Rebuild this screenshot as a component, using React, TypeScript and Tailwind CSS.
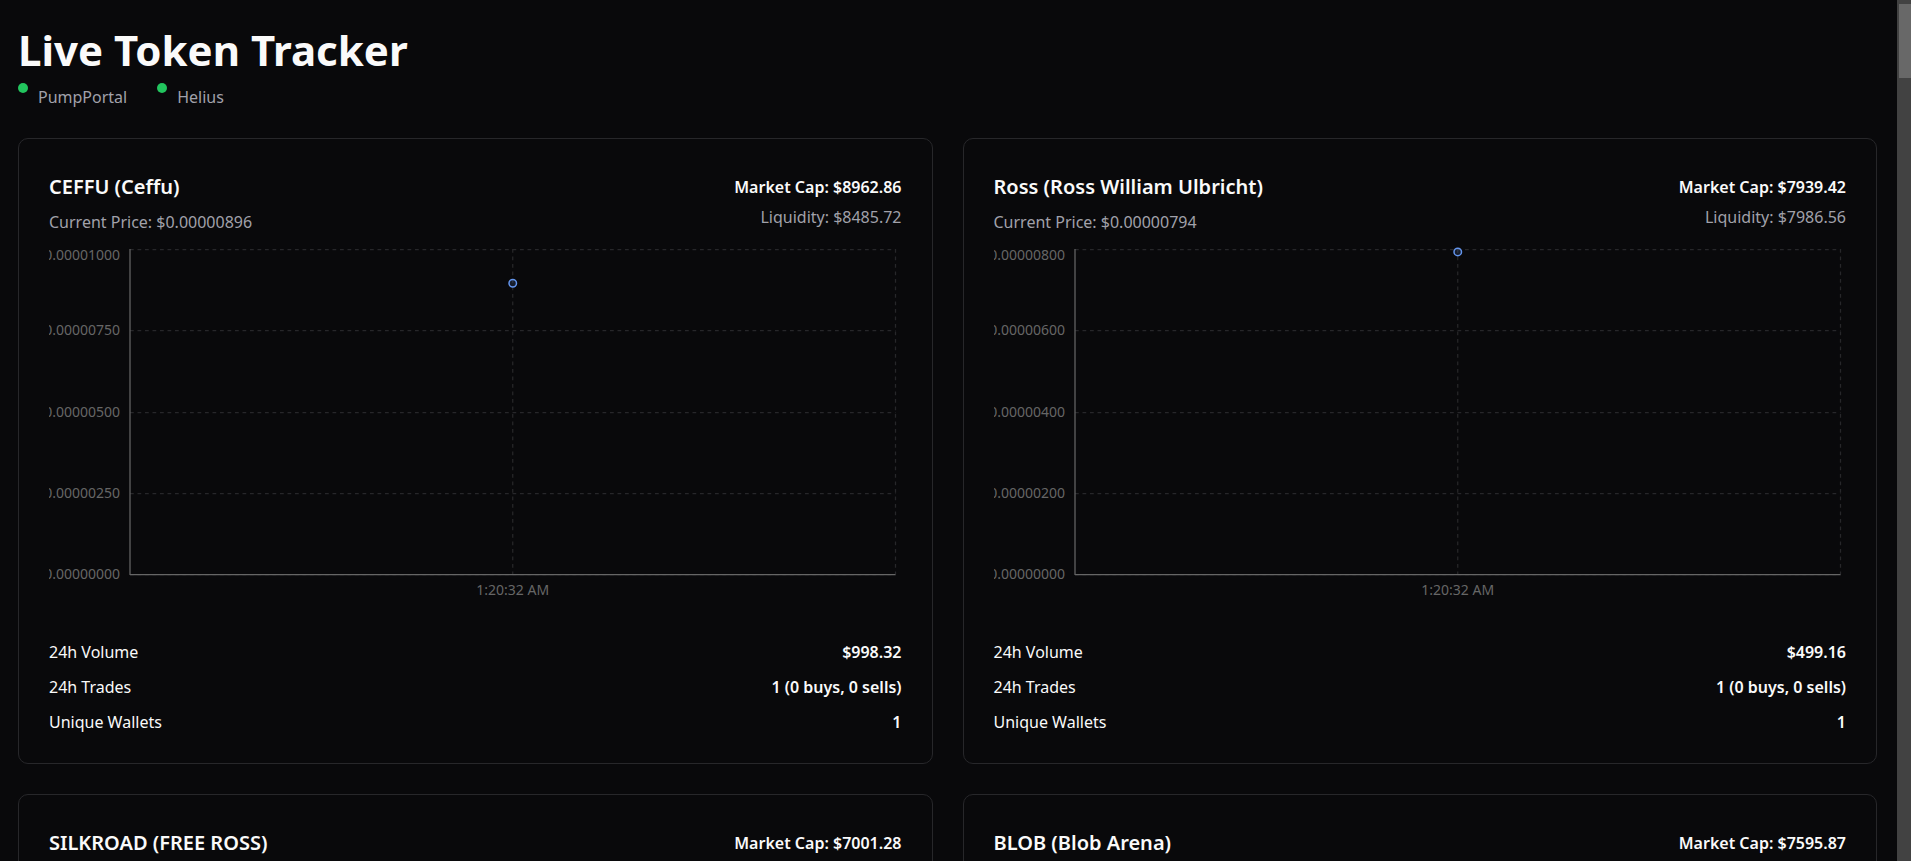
type Token = {
  name: string;
  price: string;
  marketCap: string;
  liquidity: string;
  volume: string;
  ticks: string[];
  /** Share of the y axis reached by the latest price, 0 to 1. */
  level: number;
};

const PLOT_HEIGHT = 325;
const TIME = "1:20:32 AM";

const tokens: Token[] = [
  {
    name: "CEFFU (Ceffu)",
    price: "0.00000896",
    marketCap: "8962.86",
    liquidity: "8485.72",
    volume: "998.32",
    ticks: ["0.00001000", "0.00000750", "0.00000500", "0.00000250", "0.00000000"],
    level: 0.896,
  },
  {
    name: "Ross (Ross William Ulbricht)",
    price: "0.00000794",
    marketCap: "7939.42",
    liquidity: "7986.56",
    volume: "499.16",
    ticks: ["0.00000800", "0.00000600", "0.00000400", "0.00000200", "0.00000000"],
    level: 0.9925,
  },
  {
    name: "SILKROAD (FREE ROSS)",
    price: "0.00000700",
    marketCap: "7001.28",
    liquidity: "7490.12",
    volume: "499.16",
    ticks: ["0.00000800", "0.00000600", "0.00000400", "0.00000200", "0.00000000"],
    level: 0.875,
  },
  {
    name: "BLOB (Blob Arena)",
    price: "0.00000760",
    marketCap: "7595.87",
    liquidity: "7812.40",
    volume: "499.16",
    ticks: ["0.00000800", "0.00000600", "0.00000400", "0.00000200", "0.00000000"],
    level: 0.95,
  },
];

function PriceChart({ ticks, level }: { ticks: string[]; level: number }) {
  const step = PLOT_HEIGHT / (ticks.length - 1);
  return (
    <svg className="block h-[375px] w-full overflow-hidden" role="img" aria-label="Price history">
      <g fill="#666" fontSize="14" textAnchor="end">
        {ticks.map((tick, i) => (
          <text key={tick} x="71" y={i === 0 ? 16 : Math.round(5 + i * step + 5)}>
            {tick}
          </text>
        ))}
      </g>
      <svg x="81" y="5" height={PLOT_HEIGHT} className="w-[calc(100%-87px)] overflow-visible">
        <g stroke="#27272a" strokeWidth="1.25" strokeDasharray="3.75 3.75">
          {ticks.map((tick, i) => (
            <line key={tick} x1="0" x2="100%" y1={Math.round(i * step) + 0.5} y2={Math.round(i * step) + 0.5} />
          ))}
          <line x1="50%" x2="50%" y1="0" y2="100%" />
          <line x1="100%" x2="100%" y1="0" y2="100%" />
        </g>
        <g stroke="#666" strokeWidth="1.25">
          <line x1="0" x2="0" y1="0" y2={PLOT_HEIGHT + 1} />
          <line x1="0" x2="100%" y1={PLOT_HEIGHT + 0.5} y2={PLOT_HEIGHT + 0.5} />
        </g>
        <circle cx="50%" cy={PLOT_HEIGHT * (1 - level) + 0.5} r="3.75" fill="#6495ed" fillOpacity="0.15" stroke="#6495ed" strokeWidth="1.5" />
        <text x="50%" y="346" fill="#666" fontSize="14" textAnchor="middle">
          {TIME}
        </text>
      </svg>
    </svg>
  );
}

function Stat({ label, value }: { label: string; value: string }) {
  return (
    <div className="flex justify-between">
      <dt>{label}</dt>
      <dd className="font-semibold">{value}</dd>
    </div>
  );
}

function TokenCard({ token }: { token: Token }) {
  return (
    <article className="min-w-0 rounded-[10px] border border-[#27272a] px-[30px] pt-[30px] pb-7 text-base leading-[25px]">
      <header className="mb-[9px] flex items-center justify-between gap-5">
        <div>
          <h2 className="text-xl leading-9 font-semibold">{token.name}</h2>
          <p className="mt-[5px] text-[#a1a1aa]">Current Price: ${token.price}</p>
        </div>
        <div className="text-right">
          <p className="font-semibold">Market Cap: ${token.marketCap}</p>
          <p className="mt-[5px] text-[#a1a1aa]">Liquidity: ${token.liquidity}</p>
        </div>
      </header>
      <PriceChart ticks={token.ticks} level={token.level} />
      <dl className="mt-[21px] flex flex-col gap-[10px]">
        <Stat label="24h Volume" value={`$${token.volume}`} />
        <Stat label="24h Trades" value="1 (0 buys, 0 sells)" />
        <Stat label="Unique Wallets" value="1" />
      </dl>
    </article>
  );
}

function Status({ name }: { name: string }) {
  return (
    <li className="flex items-start gap-[10px]">
      <span className="size-[10px] rounded-full bg-[#22c55e]" />
      <span>{name}</span>
    </li>
  );
}

export default function App() {
  return (
    <div className="flex h-screen overflow-hidden bg-[#09090b] font-['Noto_Sans',sans-serif] text-[#fafafa]">
      <main className="min-w-0 flex-1 overflow-hidden pt-[25px] pr-5 pl-[18px]">
        <h1 className="text-[42px] leading-[50px] font-bold">Live Token Tracker</h1>
        <ul className="mt-2 mb-[27px] flex gap-[30px] text-base leading-7 text-[#a1a1aa]">
          <Status name="PumpPortal" />
          <Status name="Helius" />
        </ul>
        <div className="grid grid-cols-2 gap-[30px]">
          {tokens.map((token) => (
            <TokenCard key={token.name} token={token} />
          ))}
        </div>
      </main>
      <div aria-hidden="true" className="w-[14px] shrink-0 bg-[#424242] pt-1 pl-[2px]">
        <div className="h-[74px] bg-[#686868]" />
      </div>
    </div>
  );
}
